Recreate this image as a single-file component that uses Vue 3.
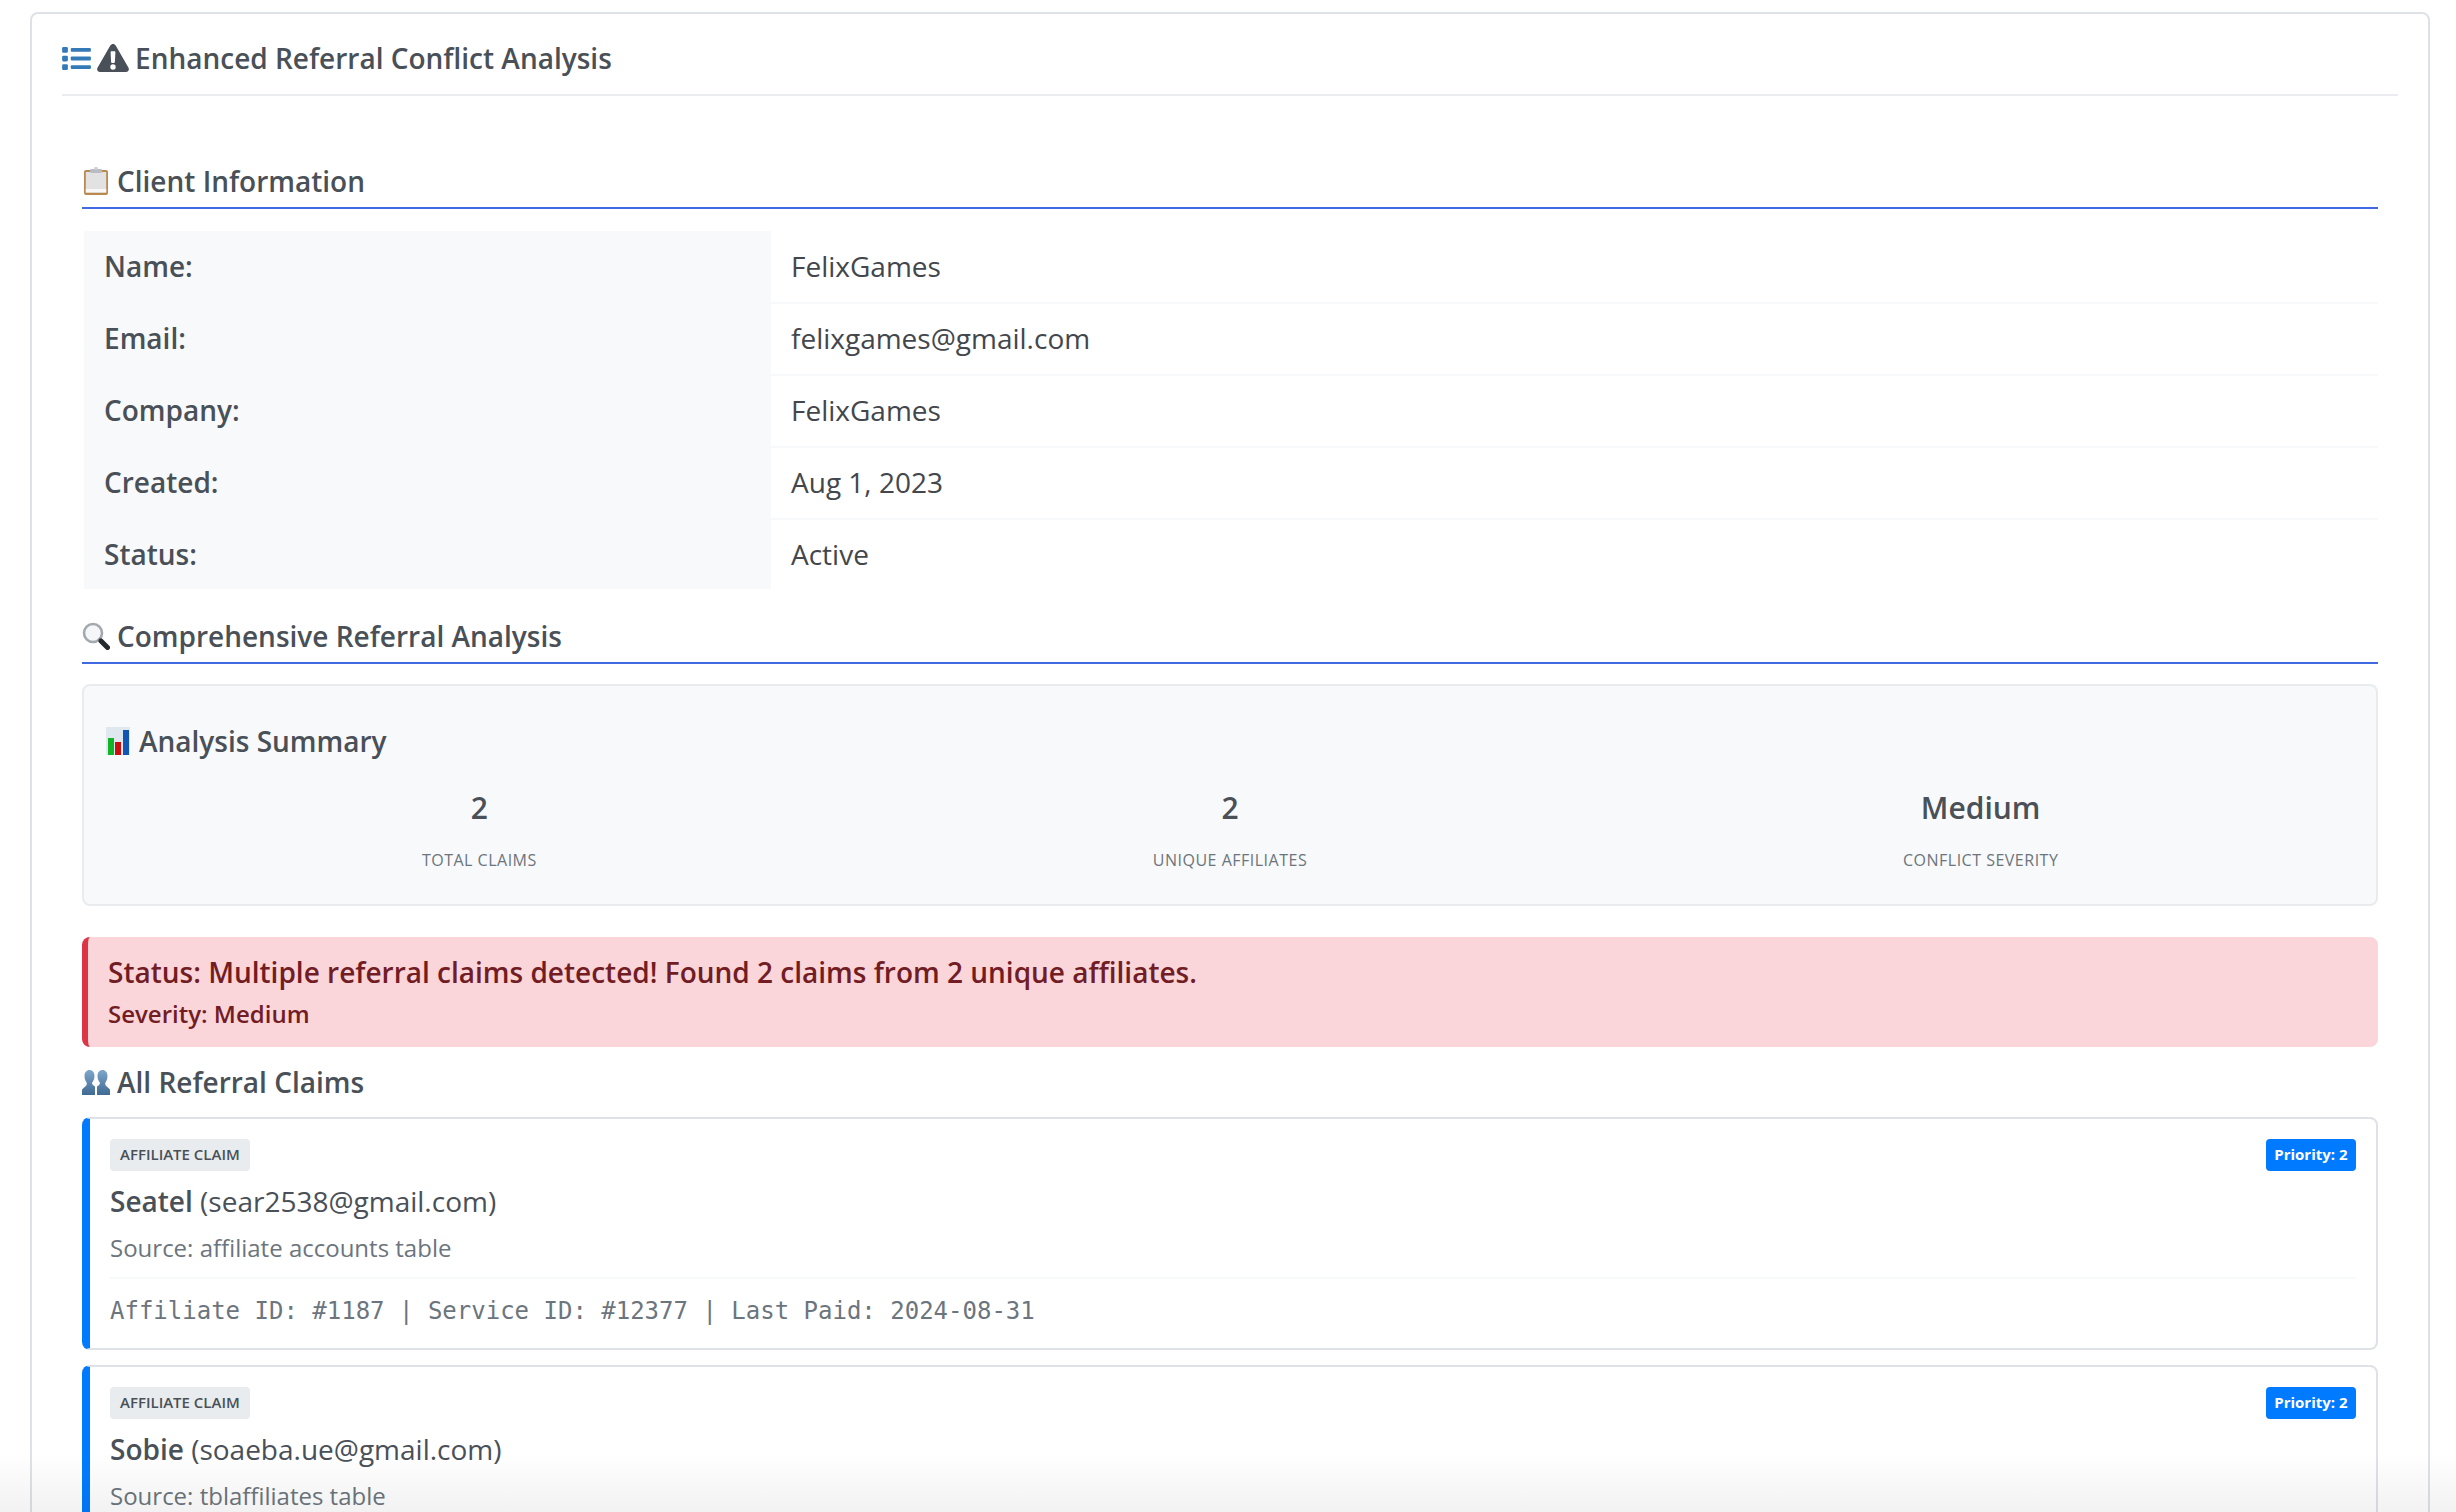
<script setup>
const clientRows = [
  { label: 'Name:', value: 'FelixGames' },
  { label: 'Email:', value: 'felixgames@gmail.com' },
  { label: 'Company:', value: 'FelixGames' },
  { label: 'Created:', value: 'Aug 1, 2023' },
  { label: 'Status:', value: 'Active' }
]

const stats = [
  { value: '2', label: 'Total Claims' },
  { value: '2', label: 'Unique Affiliates' },
  { value: 'Medium', label: 'Conflict Severity' }
]

const claims = [
  {
    name: 'Seatel',
    email: 'sear2538@gmail.com',
    source: 'affiliate accounts table',
    meta: 'Affiliate ID: #1187 | Service ID: #12377 | Last Paid: 2024-08-31'
  },
  {
    name: 'Sobie',
    email: 'soaeba.ue@gmail.com',
    source: 'tblaffiliates table',
    meta: ''
  }
]
</script>

<template>
  <div class="page">
    <section class="panel">
      <header class="panel-header">
        <svg class="icon-list" viewBox="0 0 30 24" aria-hidden="true">
          <rect x="0" y="0" width="6" height="6" rx="1.4" />
          <rect x="0" y="9" width="6" height="6" rx="1.4" />
          <rect x="0" y="18" width="6" height="6" rx="1.4" />
          <rect x="9" y="1" width="21" height="4" rx="1" />
          <rect x="9" y="10" width="21" height="4" rx="1" />
          <rect x="9" y="19" width="21" height="4" rx="1" />
        </svg>
        <svg class="icon-warning" viewBox="0 0 32 28" aria-hidden="true">
          <path
            fill-rule="evenodd"
            d="M16 0c1.1 0 2.1.6 2.7 1.6l12.8 22.2c1.1 2-.3 4.2-2.6 4.2H3.1C.8 28-.6 25.800.5 23.800L13.300 1.600C13.900.6 14.900 0 16 0Zm-2.400 8.200.5 9.800c0 .5.4.9.9.9h2c.5 0 .9-.4.9-.9l.5-9.800c0-.5-.4-1-.9-1h-3c-.5 0-.9.5-.9 1ZM16 20.300a2.700 2.700 0 1 0 0 5.400 2.700 2.700 0 0 0 0-5.400Z"
          />
        </svg>
        <h1 class="panel-title">Enhanced Referral Conflict Analysis</h1>
      </header>

      <div class="panel-body">
        <h2 class="section-title section-title--first">
          <svg class="emoji" viewBox="0 0 28 28" aria-hidden="true">
            <rect x="2" y="3" width="24" height="25" rx="2" fill="#b98a4e" />
            <rect x="3.800" y="5" width="20.400" height="20.500" fill="#e2e2e2" />
            <rect x="3.800" y="22" width="20.400" height="3.500" fill="#f7f7f7" />
            <rect x="8" y="2" width="12" height="4" rx="1" fill="#b8bcc2" />
            <rect x="12" y="0" width="4" height="3" rx="1.500" fill="#ccd0d5" />
          </svg>
          Client Information
        </h2>

        <table class="client-table">
          <tbody>
            <tr v-for="row in clientRows" :key="row.label">
              <th>{{ row.label }}</th>
              <td>{{ row.value }}</td>
            </tr>
          </tbody>
        </table>

        <h2 class="section-title section-title--analysis">
          <svg class="emoji" viewBox="0 0 28 28" aria-hidden="true">
            <circle cx="11" cy="11" r="9" fill="#f4f6f8" stroke="#a4a9af" stroke-width="2.600" />
            <path d="M16.500 16.500l2 2" stroke="#8a8f95" stroke-width="2.400" />
            <path d="M19 19l6.500 6.500" stroke="#26292d" stroke-width="5" stroke-linecap="round" />
          </svg>
          Comprehensive Referral Analysis
        </h2>

        <div class="summary">
          <h3 class="summary-title">
            <svg class="emoji" viewBox="0 0 24 28" aria-hidden="true">
              <rect x="0" y="0" width="24" height="28" fill="#dfe7ef" />
              <rect x="2" y="11" width="6" height="17" fill="#12b427" />
              <rect x="9" y="15" width="6" height="13" fill="#c9100f" />
              <rect x="17" y="3" width="6" height="25" fill="#1256b4" />
            </svg>
            Analysis Summary
          </h3>
          <div class="summary-grid">
            <div v-for="stat in stats" :key="stat.label" class="stat">
              <div class="stat-value">{{ stat.value }}</div>
              <div class="stat-label">{{ stat.label }}</div>
            </div>
          </div>
        </div>

        <div class="alert">
          <div class="alert-main">Status: Multiple referral claims detected! Found 2 claims from 2 unique affiliates.</div>
          <div class="alert-sub">Severity: Medium</div>
        </div>

        <h3 class="claims-title">
          <svg class="emoji" viewBox="0 0 28 28" aria-hidden="true">
            <defs>
              <linearGradient id="bust" x1="0" y1="0" x2="0" y2="1">
                <stop offset="0" stop-color="#7fa6cb" />
                <stop offset="1" stop-color="#3f6a92" />
              </linearGradient>
            </defs>
            <path
              fill="url(#bust)"
              d="M7.500 2c3 0 5 2.500 5 6 0 3-1.100 5-2.300 6.500-.4 1 .1 2 1 2.700l1.800 1.300V27H.5c-.5 0-.5-.4-.5-.8v-4c0-1.200 1.500-2.400 3.500-4 1.100-.9 1.500-2 1.200-3.500C3.400 13 2.500 11 2.500 8c0-3.500 2-6 5-6Z"
            />
            <path
              fill="url(#bust)"
              d="M20.500 2c-3 0-5 2.500-5 6 0 3 1.100 5 2.300 6.500.4 1-.1 2-1 2.700L15 18.500V27h12.500c.5 0 .5-.4.5-.8v-4c0-1.200-1.500-2.400-3.500-4-1.100-.9-1.500-2-1.200-3.500 1.300-1.700 2.200-3.700 2.200-6.700 0-3.500-2-6-5-6Z"
            />
          </svg>
          All Referral Claims
        </h3>

        <article v-for="claim in claims" :key="claim.email" class="claim">
          <div class="claim-top">
            <span class="tag">Affiliate Claim</span>
            <span class="priority">Priority: 2</span>
          </div>
          <div class="claim-name"><strong>{{ claim.name }}</strong> ({{ claim.email }})</div>
          <div class="claim-source">Source: {{ claim.source }}</div>
          <div v-if="claim.meta" class="claim-meta">{{ claim.meta }}</div>
        </article>
      </div>
    </section>
    <div class="bottom-fade" aria-hidden="true"></div>
  </div>
</template>

<style>
html,
body {
  margin: 0;
  background: #ffffff;
}
</style>

<style scoped>
.page {
  position: relative;
  height: 100vh;
  overflow: hidden;
  box-sizing: border-box;
  padding: 12px 26px 0 30px;
  background: #ffffff;
  color: #495057;
  font-family: "Open Sans", "Noto Sans", sans-serif;
  font-size: 28px;
}

.panel {
  border: 2px solid #dee2e6;
  border-radius: 8px;
  padding: 0 30px;
  background: #ffffff;
}

.panel-header {
  display: flex;
  align-items: center;
  gap: 6px;
  height: 72px;
  padding-top: 8px;
  border-bottom: 2px solid #ebecef;
}

.icon-list {
  width: 29px;
  height: 23px;
  fill: #337ab7;
}

.icon-warning {
  width: 32px;
  height: 28px;
  fill: #495057;
}

.panel-title {
  margin: 0;
  font-size: 28px;
  font-weight: 600;
  line-height: 38px;
}

.panel-body {
  padding: 0 20px;
}

.section-title {
  display: flex;
  align-items: center;
  gap: 7px;
  margin: 0 0 20px;
  padding-bottom: 8px;
  border-bottom: 2px solid #4169e1;
  font-size: 28px;
  font-weight: 600;
  line-height: 36px;
}

.section-title--first {
  margin-top: 67px;
  margin-bottom: 22px;
}

.section-title--analysis {
  margin-top: 29px;
}

.emoji {
  flex: none;
  width: 28px;
  height: 28px;
}

.client-table {
  width: calc(100% - 2px);
  margin-left: 2px;
  border-collapse: collapse;
}

.client-table th,
.client-table td {
  height: 72px;
  box-sizing: border-box;
  padding: 0 20px 2px;
  border-bottom: 2px solid #f8f9fa;
  font-size: 28px;
  text-align: left;
}

.client-table th {
  width: 687px;
  background: #f8f9fa;
  font-weight: 600;
}

.client-table td {
  color: #43474c;
}

.client-table tr:last-child td,
.client-table tr:last-child th {
  height: 70px;
  border-bottom: none;
}

.summary {
  border: 2px solid #e9ecef;
  border-radius: 8px;
  padding: 20px;
  background: #f8f9fa;
  height: 222px;
  box-sizing: border-box;
}

.summary-title {
  display: flex;
  align-items: center;
  gap: 7px;
  margin: 16px 0 26px;
  font-size: 28px;
  font-weight: 600;
  line-height: 38px;
}

.summary-grid {
  display: grid;
  grid-template-columns: repeat(3, 1fr);
  text-align: center;
}

.stat-value {
  font-size: 30px;
  font-weight: 600;
  line-height: 44px;
}

.stat-label {
  margin-top: 20px;
  color: #6c757d;
  font-size: 16px;
  letter-spacing: 0.5px;
  line-height: 20px;
  text-transform: uppercase;
}

.alert {
  margin-top: 31px;
  height: 110px;
  box-sizing: border-box;
  padding: 16px 20px 0;
  border-left: 6px solid #dc3545;
  border-radius: 8px;
  background: #fad5da;
  color: #721c24;
}

.alert-main {
  font-size: 28px;
  font-weight: 600;
  line-height: 38px;
}

.alert-sub {
  margin-top: 4px;
  font-size: 24px;
  font-weight: 600;
  line-height: 38px;
}

.claims-title {
  display: flex;
  align-items: center;
  gap: 7px;
  margin: 16px 0 16px;
  font-size: 28px;
  font-weight: 600;
  line-height: 38px;
}

.claim {
  margin-bottom: 15px;
  border: 2px solid #dee2e6;
  border-left: 8px solid #007bff;
  border-radius: 8px;
  padding: 20px;
  background: #ffffff;
}

.claim-top {
  display: flex;
  align-items: center;
  justify-content: space-between;
}

.tag,
.priority {
  height: 32px;
  padding: 0 10px;
  border-radius: 4px;
  font-size: 15px;
  line-height: 30px;
}

.tag {
  background: #e9ecef;
  color: #495057;
  font-weight: 600;
  text-transform: uppercase;
}

.priority {
  padding: 0 8.5px;
  background: #007bff;
  color: #ffffff;
  font-weight: 700;
}

.claim-name {
  margin-top: 11px;
  font-size: 28px;
  line-height: 38px;
}

.claim-name strong {
  font-weight: 600;
}

.claim-source {
  margin-top: 10px;
  color: #6c757d;
  font-size: 24px;
  line-height: 36px;
}

.claim-meta {
  margin-top: 11px;
  padding-top: 15px;
  border-top: 2px solid #f8f9fa;
  color: #6c757d;
  font-family: "DejaVu Sans Mono", monospace;
  font-size: 24px;
  line-height: 34px;
}

.bottom-fade {
  position: absolute;
  right: 0;
  bottom: 0;
  left: 0;
  height: 60px;
  background: linear-gradient(rgba(0, 0, 0, 0), rgba(0, 0, 0, 0.05));
  pointer-events: none;
}
</style>
